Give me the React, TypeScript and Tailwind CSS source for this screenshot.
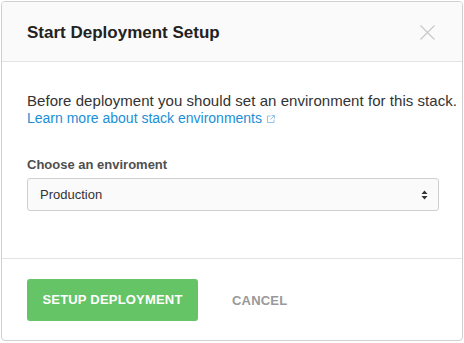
import React from "react";

export default function App() {
  return (
    <div className="w-[464px] h-[343px] bg-white pt-px pl-px" style={{ fontFamily: '"Liberation Sans", Arial, sans-serif' }}>
      <div className="w-[462px] h-[340px] border border-[#d0d0d0] rounded-[4px] bg-white flex flex-col overflow-hidden">
        <div className="h-[60px] bg-[#fafafa] border-b border-[#e3e3e3] flex items-center justify-between pl-[25px] pr-[27px] pt-[2px] shrink-0">
          <h1 className="text-[17px] font-bold text-[#222] leading-[17px]">Start Deployment Setup</h1>
          <svg width="15" height="15" viewBox="0 0 15 15" className="text-[#c8c8c8]">
            <path d="M0.5 0.5L14.5 14.5M14.5 0.5L0.5 14.5" stroke="currentColor" strokeWidth="1.2" fill="none" />
          </svg>
        </div>
        <div className="flex-1 px-[25px] pt-[30px]">
          <p className="text-[15px] leading-[18px] text-[#333] whitespace-nowrap tracking-[0.05px]">
            Before deployment you should set an environment for this stack.
          </p>
          <div className="text-[14px] leading-[17px]">
            <a className="text-[#1a8fd6] inline-flex items-center gap-[5px]">
              Learn more about stack environments
              <svg width="8" height="8" viewBox="0 0 8 8" className="mt-[1px]">
                <path d="M3.5 1H0.5V7.5H7V4.5" stroke="#8fc3e6" strokeWidth="1" fill="none" />
                <path d="M4.5 0.5H7.5V3.5M7.5 0.5L3.5 4.5" stroke="#8fc3e6" strokeWidth="1" fill="none" />
              </svg>
            </a>
          </div>
          <div className="mt-[30px] text-[13px] font-bold text-[#4f4f4f] leading-[16px]">Choose an enviroment</div>
          <div className="mt-[5px] h-[33px] w-[412px] border border-[#cfcfcf] rounded-[3px] bg-[#fafafa] flex items-center justify-between pl-[12px] pr-[10px]">
            <span className="text-[13px] text-[#333]">Production</span>
            <svg width="7" height="10" viewBox="0 0 7 10">
              <path d="M3.5 0.5L6.5 4H0.5Z M3.5 9.5L6.5 6H0.5Z" fill="#333" />
            </svg>
          </div>
        </div>
        <div className="h-[82px] border-t border-[#e3e3e3] flex items-center pl-[25px] shrink-0">
          <button className="w-[171px] h-[42px] bg-[#65c466] rounded-[3px] text-white text-[13px] font-bold tracking-[0.2px]">
            SETUP DEPLOYMENT
          </button>
          <button className="ml-[34px] mt-[3px] text-[#999] text-[13px] font-bold tracking-[0.2px]">CANCEL</button>
        </div>
      </div>
    </div>
  );
}
